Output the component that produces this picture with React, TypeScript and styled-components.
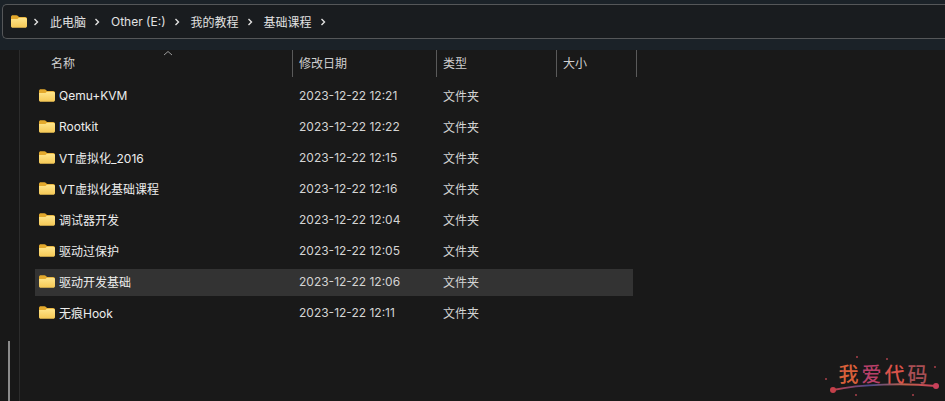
import React from 'react'
import styled, { createGlobalStyle } from 'styled-components'

const FONT = `Inter, "Open Sans", "Noto Sans CJK SC", sans-serif`

const crumbs = ['此电脑', 'Other (E:)', '我的教程', '基础课程']

const files = [
  { name: 'Qemu+KVM', date: '2023-12-22 12:21' },
  { name: 'Rootkit', date: '2023-12-22 12:22' },
  { name: 'VT虚拟化_2016', date: '2023-12-22 12:15' },
  { name: 'VT虚拟化基础课程', date: '2023-12-22 12:16' },
  { name: '调试器开发', date: '2023-12-22 12:04' },
  { name: '驱动过保护', date: '2023-12-22 12:05' },
  { name: '驱动开发基础', date: '2023-12-22 12:06', selected: true },
  { name: '无痕Hook', date: '2023-12-22 12:11' },
]

const marks = [
  { ch: '我', color: '#d8603a' },
  { ch: '爱', color: '#b8406a' },
  { ch: '代', color: '#d9534a' },
  { ch: '码', color: '#a84f55' },
]

const specks = [
  [44, 6],
  [74, 8],
  [13, 28],
  [122, 16],
  [43, 44],
  [100, 44],
  [30, 20],
]

const GlobalStyle = createGlobalStyle`
  html, body {
    margin: 0;
    padding: 0;
    background: #191919;
  }
  body {
    font-family: ${FONT};
    font-size: 12px;
    color: #e4e4e4;
  }
`

const Page = styled.div`
  position: relative;
  width: 945px;
  height: 401px;
  overflow: hidden;
  display: flex;
  flex-direction: column;
  background: #191919;
`

const TopBar = styled.div`
  height: 50px;
  flex: none;
  box-sizing: border-box;
  padding: 4px 0 11px 2px;
  background: #1b2228;
`

const AddressBox = styled.div`
  height: 35px;
  box-sizing: border-box;
  display: flex;
  align-items: center;
  padding-left: 8px;
  border: 1px solid #555759;
  border-right: none;
  border-radius: 5px 0 0 5px;
  background: #191c1f;
`

const Crumb = styled.span`
  font-size: 12px;
  color: #e2e2e2;
  white-space: nowrap;
`

const Chevron = styled.svg<{ $lead: number }>`
  width: 6px;
  height: 8px;
  margin: 1px 11px 0 ${(p) => p.$lead}px;
  flex: none;
`

const Body = styled.div`
  flex: 1;
  display: flex;
  min-height: 0;
`

const Rail = styled.div`
  width: 19px;
  flex: none;
  display: flex;
  flex-direction: column;
  justify-content: flex-end;
  border-right: 1px solid #2c2c2c;
  background: #181818;
`

const Thumb = styled.div`
  width: 2px;
  height: 60px;
  margin-left: 8px;
  background: #8a8a8a;
`

const Main = styled.div`
  position: relative;
  flex: 1;
  display: flex;
  flex-direction: column;
`

const HeaderRow = styled.div`
  height: 27px;
  display: flex;
  margin-bottom: 6px;
`

const HeaderCell = styled.div<{ $w: number; $pad: number }>`
  width: ${(p) => p.$w}px;
  flex: none;
  box-sizing: border-box;
  padding: 5px 0 0 ${(p) => p.$pad}px;
  border-right: 1px solid #5a5a5a;
  font-size: 12px;
  line-height: 17px;
  color: #cfcfcf;
`

const SortCaret = styled.svg`
  position: absolute;
  left: 143px;
  top: 0;
  width: 10px;
  height: 6px;
`

const List = styled.div`
  display: flex;
  flex-direction: column;
  gap: 4px;
  margin-left: 15px;
  width: 598px;
`

const Row = styled.div<{ $selected?: boolean }>`
  height: 27px;
  box-sizing: border-box;
  padding-bottom: 2px;
  display: flex;
  align-items: center;
  background: ${(p) => (p.$selected ? '#333333' : 'transparent')};
`

const NameCell = styled.div`
  width: 264px;
  flex: none;
  display: flex;
  align-items: center;
  padding-left: 4px;
  box-sizing: border-box;
  color: #ededed;
`

const FolderIcon = styled.svg`
  width: 16px;
  height: 13px;
  margin-right: 4px;
  flex: none;
`

const DateCell = styled.div`
  width: 144px;
  flex: none;
  color: #d4d4d4;
`

const TypeCell = styled.div`
  color: #d4d4d4;
`

const Watermark = styled.div`
  position: absolute;
  right: 4px;
  bottom: 4px;
  width: 128px;
  height: 46px;
`

const MarkText = styled.div`
  display: flex;
  justify-content: center;
  gap: 3px;
  padding: 10px 0 0 12px;
  font-family: "Noto Sans CJK SC", sans-serif;
  font-size: 20px;
  line-height: 26px;
  font-weight: 500;
`

const MarkChar = styled.span<{ $color: string }>`
  color: ${(p) => p.$color};
`

const MarkDrawing = styled.svg`
  position: absolute;
  inset: 0;
  width: 128px;
  height: 46px;
`

const Folder = () => (
  <FolderIcon viewBox="0 0 16 14" preserveAspectRatio="none">
    <defs>
      <linearGradient id="folderFill" x1="0" y1="0" x2="0" y2="1">
        <stop offset="0" stopColor="#ffe68c" />
        <stop offset="1" stopColor="#f5c855" />
      </linearGradient>
    </defs>
    <path d="M0 2.2C0 1 .8.3 1.8.3h3.6c.7 0 1.1.3 1.6.8l1 1h6.2c1 0 1.8.8 1.8 1.8v1H0z" fill="#e3a92c" />
    <path d="M0 4.2h6.4l1.5-1.3h6.3c1 0 1.8.8 1.8 1.8v7.4c0 1-.8 1.6-1.8 1.6H1.8C.8 13.7 0 13.1 0 12.1z" fill="url(#folderFill)" />
  </FolderIcon>
)

const Arrow = ({ lead = 8 }: { lead?: number }) => (
  <Chevron $lead={lead} viewBox="0 0 6 8">
    <path d="M1.5 1 4.5 4 1.5 7" fill="none" stroke="#e2e2e2" strokeWidth="1.4" />
  </Chevron>
)

export default function App() {
  return (
    <Page>
      <GlobalStyle />
      <TopBar>
        <AddressBox>
          <Folder />
          <Arrow lead={2} />
          {crumbs.map((c) => (
            <React.Fragment key={c}>
              <Crumb>{c}</Crumb>
              <Arrow />
            </React.Fragment>
          ))}
        </AddressBox>
      </TopBar>
      <Body>
        <Rail>
          <Thumb />
        </Rail>
        <Main>
          <SortCaret viewBox="0 0 10 6">
            <path d="M1 5 5 1.5 9 5" fill="none" stroke="#9a9a9a" strokeWidth="1" />
          </SortCaret>
          <HeaderRow>
            <HeaderCell $w={273} $pad={31}>名称</HeaderCell>
            <HeaderCell $w={144} $pad={6}>修改日期</HeaderCell>
            <HeaderCell $w={120} $pad={6}>类型</HeaderCell>
            <HeaderCell $w={80} $pad={6}>大小</HeaderCell>
          </HeaderRow>
          <List>
            {files.map((f) => (
              <Row key={f.name} $selected={f.selected}>
                <NameCell>
                  <Folder />
                  {f.name}
                </NameCell>
                <DateCell>{f.date}</DateCell>
                <TypeCell>文件夹</TypeCell>
              </Row>
            ))}
          </List>
        </Main>
      </Body>
      <Watermark>
        <MarkText>
          {marks.map((m) => (
            <MarkChar key={m.ch} $color={m.color}>{m.ch}</MarkChar>
          ))}
        </MarkText>
        <MarkDrawing viewBox="0 0 128 46">
          <defs>
            <linearGradient id="markLine" x1="0" y1="0" x2="1" y2="0">
              <stop offset="0" stopColor="#c4404a" />
              <stop offset="0.35" stopColor="#4a4a8c" />
              <stop offset="0.7" stopColor="#c0604a" />
              <stop offset="1" stopColor="#c8405a" />
            </linearGradient>
          </defs>
          <path d="M20 39C48 33 92 32 123 35" fill="none" stroke="url(#markLine)" strokeWidth="2" />
          <circle cx="20" cy="39" r="3" fill="#c4404a" />
          <circle cx="123" cy="35" r="3" fill="#c8405a" />
          {specks.map(([x, y]) => (
            <circle key={`${x}-${y}`} cx={x} cy={y} r="1" fill="#a8404a" />
          ))}
        </MarkDrawing>
      </Watermark>
    </Page>
  )
}
